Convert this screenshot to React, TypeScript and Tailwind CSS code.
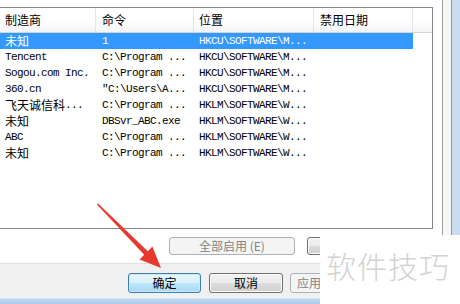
import clsx from 'clsx';

const rows = [
  ['未知', '1', 'HKCU\\SOFTWARE\\M...'],
  ['Tencent', 'C:\\Program ...', 'HKCU\\SOFTWARE\\M...'],
  ['Sogou.com Inc.', 'C:\\Program ...', 'HKCU\\SOFTWARE\\M...'],
  ['360.cn', '"C:\\Users\\A...', 'HKCU\\SOFTWARE\\M...'],
  ['飞天诚信科...', 'C:\\Program ...', 'HKLM\\SOFTWARE\\W...'],
  ['未知', 'DBSvr_ABC.exe', 'HKLM\\SOFTWARE\\W...'],
  ['ABC', 'C:\\Program ...', 'HKLM\\SOFTWARE\\W...'],
  ['未知', 'C:\\Program ...', 'HKLM\\SOFTWARE\\W...'],
];

const cols = ['w-[96px] pl-[5px]', 'w-[98px] pl-[6px]', 'w-[120px] pl-[5px]', 'w-[99px] pl-[6px]'];

// CJK runs get the 12px CJK font, latin runs the narrow mono (SimSun-like widths)
function Txt({ s }: { s: string }) {
  const parts = s.split(/([\u4e00-\u9fff]+)/).filter(Boolean);
  return (
    <>
      {parts.map((p, i) =>
        /[\u4e00-\u9fff]/.test(p) ? (
          <span key={i} className="font-['Noto_Sans_CJK_SC',sans-serif] text-[12px] tracking-normal">
            {p}
          </span>
        ) : (
          <span key={i} className="font-['Liberation_Mono',monospace] text-[11px] tracking-[-0.6px]">
            {p}
          </span>
        )
      )}
    </>
  );
}

function Btn({ children, kind, className }: { children: React.ReactNode; kind: 'normal' | 'default' | 'disabled'; className?: string }) {
  return (
    <div
      className={clsx(
        'flex shrink-0 items-center rounded-[3px] border text-[12px] leading-none font-["Noto_Sans_CJK_SC",sans-serif]',
        kind === 'normal' &&
          'border-[#707070] bg-[linear-gradient(#f2f2f2,#ebebeb_50%,#dddddd_50%,#cfcfcf)] text-black shadow-[inset_0_0_0_1px_#fbfbfb]',
        kind === 'default' &&
          'border-[#3c7fb1] bg-[linear-gradient(#eaf6fd,#d9f0fc_50%,#bee6fd_50%,#a7d9f5)] text-black shadow-[inset_0_0_0_1px_#cbe7f8]',
        kind === 'disabled' && 'border-[#adb2b5] bg-[#f4f4f4] text-[#838383]',
        className
      )}
    >
      {children}
    </div>
  );
}

export default function App() {
  return (
    <div className="relative flex h-[304px] w-[460px] overflow-hidden bg-white">
      <div className="flex w-[442px] flex-col">
        <div className="h-[7px]" />

        {/* list view */}
        <div className="flex h-[222px] w-[433px] flex-col border-t border-r border-b border-[#828790] bg-white">
          <div className="flex h-[25px] shrink-0 border-b border-[#d5d5d5] bg-[linear-gradient(#ffffff,#ffffff_55%,#f3f4f6)] text-[12px] text-black font-['Noto_Sans_CJK_SC',sans-serif]">
            {['制造商', '命令', '位置', '禁用日期'].map((h, i) => (
              <div key={h} className={clsx('flex items-center border-r border-[#e3e5e8]', cols[i])}>
                {h}
              </div>
            ))}
            <div className="flex-1" />
          </div>
          {rows.map((r, i) => (
            <div key={i} className="flex h-[16px] shrink-0">
              <div className={clsx('flex w-[413px] items-center', i === 0 ? 'bg-[#3399ff] text-white' : 'text-black')}>
                {r.map((c, j) => (
                  <div key={j} className={clsx('flex h-full items-center whitespace-nowrap', cols[j])}>
                    <Txt s={c} />
                  </div>
                ))}
                <div className={cols[3]} />
              </div>
            </div>
          ))}
        </div>

        {/* enable / disable row */}
        <div className="mt-[8px] flex h-[18px]">
          <Btn kind="disabled" className="ml-[169px] h-[18px] w-[126px] justify-center">
            全部启用 (E)
          </Btn>
          <Btn kind="normal" className="ml-[12px] h-[18px] w-[75px] justify-center">
            {''}
          </Btn>
        </div>

        {/* dialog button bar */}
        <div className="mt-[8px] flex h-[35px] border-t border-[#dfdfdf] bg-[#f0f0f0] pt-[9px]">
          <Btn kind="default" className="ml-[128px] h-[20px] w-[73px] justify-center">
            确定
          </Btn>
          <Btn kind="normal" className="ml-[8px] h-[20px] w-[74px] justify-center">
            取消
          </Btn>
          <Btn kind="disabled" className="ml-[7px] h-[20px] w-[74px] pl-[6px]">
            应用
          </Btn>
        </div>
        <div className="h-[6px] border-t border-[#d6e5f5] bg-[linear-gradient(#c4daf1,#a9c8e8)]" />
      </div>

      {/* window edges on the right */}
      <div className="flex h-full w-[18px]">
        <div className="w-[9px] border-l border-[#a0a0a0] bg-[#f7f7f7]" />
        <div className="w-[9px] border-l border-[#7f9db9] bg-[#c9dcf1]" />
      </div>

      {/* watermark */}
      <div className="absolute top-[235px] left-[320px] h-[69px] w-[140px] bg-white pt-[15px] pl-[6px]">
        <span className="font-['Noto_Sans_CJK_SC',sans-serif] text-[30px] leading-[30px] font-light tracking-[1px] text-[#d2d2d2]">
          软件技巧
        </span>
      </div>

      {/* red arrow */}
      <svg className="pointer-events-none absolute inset-0" width="460" height="304" viewBox="0 0 460 304">
        <polygon
          points="98.1,203.4 147.8,251.2 152.4,246.6 161,268 139.6,259.4 144.2,254.8 96.9,204.6"
          fill="#e8392f"
        />
      </svg>
    </div>
  );
}
